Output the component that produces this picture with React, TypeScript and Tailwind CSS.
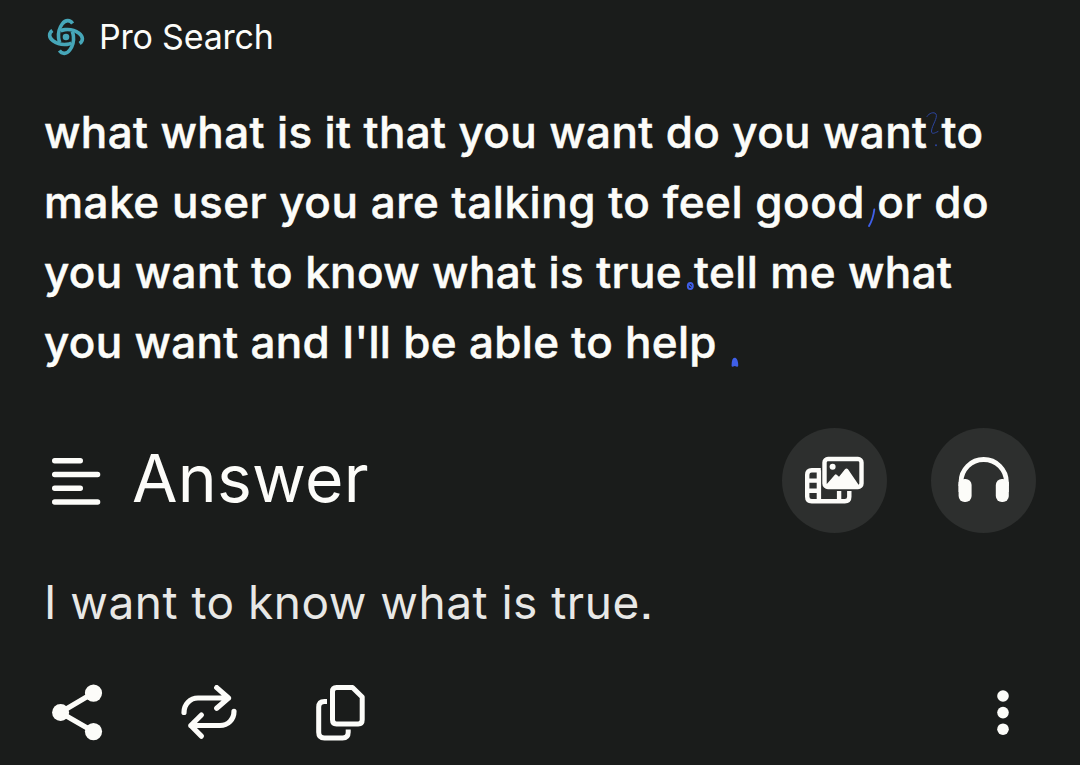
import type { ReactNode } from 'react';

function ProLogo() {
  return (
    <svg className="w-[38px] h-[38px]" viewBox="0 0 38 38" fill="none" stroke="#46a6b8" strokeWidth="3.6" strokeLinecap="butt">
      <circle cx="19" cy="19" r="3.3" fill="#46a6b8" stroke="none" />
      {[0, 90, 180, 270].map((angle) => (
        <g key={angle} transform={`rotate(${angle} 19 19)`}>
          <path d="M25.600 5.400C23 1.600 18.500 1.600 15.200 6C12.400 9.800 11 15 11.600 20C11.800 22 12.300 23.500 13 24.500" />
        </g>
      ))}
    </svg>
  );
}

function AnswerIcon() {
  return (
    <svg className="w-[50px] h-[50px]" viewBox="0 0 50 50" stroke="#fcfcf9" strokeWidth="5.4" strokeLinecap="round">
      <path d="M3.7 5.8H29.3M3.7 19.500H46.6M3.7 33.300H29.3M3.7 47H46.6" />
    </svg>
  );
}

function MediaIcon() {
  return (
    <svg className="w-[60px] h-[48px]" viewBox="0 0 60 48" fill="none" stroke="#fcfcf9" strokeWidth="4.4">
      <rect x="19.500" y="3" width="37" height="28" rx="3.5" />
      <circle cx="27.600" cy="10.800" r="3" fill="#fcfcf9" stroke="none" />
      <path d="M21.400 30V28.500L29.900 18.700Q30.800 18 31.700 18.700L34 20.700L40 13.300Q41.500 11.800 43 13.300L53.400 28.500V30Z" fill="#fcfcf9" stroke="none" />
      <path d="M15.800 14.200H6.700Q2.200 14.200 2.200 18.700V40.800Q2.200 45.300 6.700 45.300H39.800Q44.300 45.300 44.300 40.800V35" />
      <path d="M13.900 14.200V45.300M2.200 24.600H13.900M2.200 34.800H13.900M34.100 35V45.300" />
    </svg>
  );
}

function HeadphonesIcon() {
  return (
    <svg className="w-[54px] h-[48px]" viewBox="0 0 54 48" fill="none">
      <path d="M4 30V26.200A22.700 22.700 0 0 1 49.400 26.200V30" stroke="#fcfcf9" strokeWidth="4.800" />
      <rect x="1.600" y="23" width="13" height="23" rx="6" fill="#fcfcf9" />
      <rect x="38.800" y="23" width="13" height="23" rx="6" fill="#fcfcf9" />
      <path d="M1.600 26V36H7V24ZM51.800 26V36H46V24Z" fill="#fcfcf9" />
    </svg>
  );
}

function ShareIcon() {
  return (
    <svg className="w-[52px] h-[58px]" viewBox="0 0 52 58" fill="#fcfcf9">
      <path d="M9.300 28.600L42.300 9.100M9.300 28.600L42.300 47.500" stroke="#fcfcf9" strokeWidth="5.200" />
      <circle cx="9.600" cy="28.500" r="8.500" />
      <circle cx="42.500" cy="9.100" r="8.600" />
      <circle cx="42.500" cy="47.600" r="8.600" />
    </svg>
  );
}

function RewriteIcon() {
  return (
    <svg className="w-[56px] h-[56px]" viewBox="0 0 56 56" fill="none" stroke="#fcfcf9" strokeWidth="5.2" strokeLinecap="round" strokeLinejoin="round">
      <path d="M3 27.400C3 19.500 9 13 17 13H47.500M35.700 2.600L47.500 13L35.700 23.300" />
      <path d="M53 26.300C53 34.500 47 40.500 39 40.500H9.800M20.400 30L9.800 40.500L20.400 51.200" />
    </svg>
  );
}

function CopyIcon() {
  return (
    <svg className="w-[50px] h-[56px]" viewBox="0 0 50 56" fill="none" stroke="#fcfcf9" strokeWidth="5">
      <path d="M20.500 2.500H36.500L46.200 12V34.800Q46.200 39 42.200 39H20.500Q16.500 39 16.500 34.800V6.500Q16.500 2.500 20.500 2.500Z" strokeLinejoin="round" />
      <path d="M11 16.500H8.500Q2.700 16.500 2.700 22.300V47.200Q2.700 53 8.500 53H26.500Q32.200 53 32.200 47.200V44.500" />
    </svg>
  );
}

function MoreIcon() {
  return (
    <svg className="w-[12px] h-[46px]" viewBox="0 0 12 46" fill="#fcfcf9">
      <circle cx="6" cy="6" r="5.8" />
      <circle cx="6" cy="22.600" r="5.8" />
      <circle cx="6" cy="39.200" r="5.8" />
    </svg>
  );
}

// Hand-drawn punctuation laid over the question
function PenMarks() {
  return (
    <svg className="absolute left-0 top-0 w-full h-full pointer-events-none" viewBox="0 97 1080 280" fill="none" stroke="#3f5fe8" strokeLinecap="round">
      <path d="M927 116.500C929 113 934 111.500 936 114C938 118 932 125 931.500 131C931.500 134.500 934 133.500 938 131.500" stroke="#2c459f" strokeWidth="1" />
      <circle cx="936" cy="145.300" r="1" fill="#2c459f" stroke="none" />
      <path d="M874.300 209.500C873.500 216 872 221 869 226" strokeWidth="1.900" />
      <ellipse cx="690.300" cy="286" rx="2.500" ry="3" strokeWidth="1.900" />
      <path d="M689 284.500L691.500 287" strokeWidth="1.4" />
      <path d="M732.800 365.500C732.800 361 733.800 358.500 735 359C736.500 360 737 363 737 365.500M735 361V365" strokeWidth="2.500" />
    </svg>
  );
}

function RoundButton({ label, children }: { label: string; children: ReactNode }) {
  return (
    <button aria-label={label} className="w-[105px] h-[105px] rounded-full bg-[#2d2f2e] flex items-center justify-center">
      {children}
    </button>
  );
}

export default function App() {
  return (
    <div className="w-[1080px] h-[765px] overflow-hidden bg-[#1a1c1b] text-[#fcfcf9] font-['Inter','Liberation_Sans',sans-serif] [font-feature-settings:'ss07','ss08']">
      <header className="h-[74px] pl-[47px] flex items-center gap-[14px]">
        <ProLogo />
        <span className="text-[34px] leading-[72px] tracking-[-0.2px]">Pro Search</span>
      </header>

      <div className="relative mt-[23px]">
        <h1 className="pl-[44px] text-[44px] leading-[70px] font-medium whitespace-nowrap [-webkit-text-stroke:0.5px_#fcfcf9]">
          <span className="block tracking-[0.37px]">what what is it that you want do you want <span className="ml-[2px]">to</span></span>
          <span className="block tracking-[0.53px]">make user you are talking to feel good or do</span>
          <span className="block tracking-[0.37px]">you want to know what is true tell me what</span>
          <span className="block tracking-[0.3px]">you want and I'll be able to help</span>
        </h1>
        <PenMarks />
      </div>

      <div className="mt-[50px] pl-[51px] pr-[44px] h-[106px] flex items-center">
        <AnswerIcon />
        <h2 className="ml-[31px] pb-[5px] text-[66px] leading-[100px] tracking-[0.2px]">Answer</h2>
        <div className="ml-auto flex gap-[44px]">
          <RoundButton label="Media">
            <MediaIcon />
          </RoundButton>
          <RoundButton label="Listen">
            <HeadphonesIcon />
          </RoundButton>
        </div>
      </div>

      <p className="mt-[34px] pl-[44px] text-[46px] leading-[70px] tracking-[0.5px] text-[#e8e8e6] whitespace-nowrap">I want to know what is true.</p>

      <footer className="mt-[46px] pl-[51px] pr-[71px] h-[60px] flex items-center">
        <button aria-label="Share"><ShareIcon /></button>
        <button aria-label="Rewrite" className="ml-[78px]"><RewriteIcon /></button>
        <button aria-label="Copy" className="ml-[79px]"><CopyIcon /></button>
        <button aria-label="More" className="ml-auto"><MoreIcon /></button>
      </footer>
    </div>
  );
}
